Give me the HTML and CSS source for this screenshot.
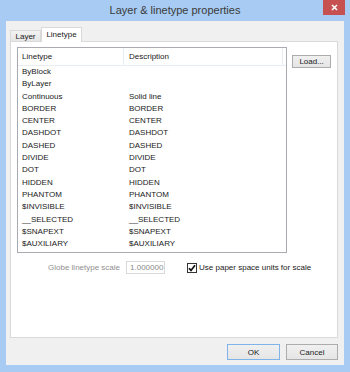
FILE: index.html
```html
<!DOCTYPE html>
<html lang="en">
<head>
  <meta charset="UTF-8">
  <title>Layer &amp; linetype properties</title>
  <link rel="stylesheet" href="styles.css">
</head>
<body>
  <div class="window">
    <div class="titlebar">
      <span></span>
      <span class="title">Layer &amp; linetype properties</span>
      <span class="close">
        <svg width="7" height="7" viewBox="0 0 7 7"><path d="M1 1L6 6M6 1L1 6" stroke="#fff" stroke-width="1.6"/></svg>
      </span>
    </div>
    <div class="client">
      <div class="tabs">
        <span class="tab">Layer</span>
        <span class="tab active">Linetype</span>
      </div>
      <div class="panel">
        <div class="top">
          <div class="listview">
            <div class="lv-head">
              <span class="c1">Linetype</span>
              <span class="c2">Description</span>
            </div>
            <div class="lv-body">
              <div class="row"><span class="c1">ByBlock</span><span class="c2"></span></div>
              <div class="row"><span class="c1">ByLayer</span><span class="c2"></span></div>
              <div class="row"><span class="c1">Continuous</span><span class="c2">Solid line</span></div>
              <div class="row"><span class="c1">BORDER</span><span class="c2">BORDER</span></div>
              <div class="row"><span class="c1">CENTER</span><span class="c2">CENTER</span></div>
              <div class="row"><span class="c1">DASHDOT</span><span class="c2">DASHDOT</span></div>
              <div class="row"><span class="c1">DASHED</span><span class="c2">DASHED</span></div>
              <div class="row"><span class="c1">DIVIDE</span><span class="c2">DIVIDE</span></div>
              <div class="row"><span class="c1">DOT</span><span class="c2">DOT</span></div>
              <div class="row"><span class="c1">HIDDEN</span><span class="c2">HIDDEN</span></div>
              <div class="row"><span class="c1">PHANTOM</span><span class="c2">PHANTOM</span></div>
              <div class="row"><span class="c1">$INVISIBLE</span><span class="c2">$INVISIBLE</span></div>
              <div class="row"><span class="c1">__SELECTED</span><span class="c2">__SELECTED</span></div>
              <div class="row"><span class="c1">$SNAPEXT</span><span class="c2">$SNAPEXT</span></div>
              <div class="row"><span class="c1">$AUXILIARY</span><span class="c2">$AUXILIARY</span></div>
            </div>
          </div>
          <button class="btn load">Load...</button>
        </div>
        <div class="options">
          <span class="muted">Globe linetype scale</span>
          <span class="input">1.000000</span>
          <span class="check">
            <svg width="8" height="8" viewBox="0 0 8 8"><path d="M1 4.2L3 6.4L7 1.2" fill="none" stroke="#111" stroke-width="1.7"/></svg>
          </span>
          <span class="check-label">Use paper space units for scale</span>
        </div>
      </div>
      <div class="footer">
        <button class="btn ok">OK</button>
        <button class="btn cancel">Cancel</button>
      </div>
    </div>
  </div>
</body>
</html>
```

FILE: styles.css
```css
*{
  box-sizing: border-box;
}
body{
  margin: 0;
  font-family: "Liberation Sans", Arial, sans-serif;
}
.window{
  width: 350px;
  height: 372px;
  background-color: #a7cbf2;
  display: flex;
  flex-direction: column;
}
.titlebar{
  height: 21px;
  display: grid;
  grid-template-columns: 1fr auto 1fr;
  align-items: start;
}
.titlebar .title{
  font-size: 11px;
  line-height: 21px;
  color: #3a3a3a;
}
.titlebar .close{
  justify-self: end;
  margin-right: 5px;
  width: 22px;
  height: 15px;
  background-color: #c75050;
  display: flex;
  align-items: center;
  justify-content: center;
}
.client{
  flex: 1;
  margin: 0 6px 7px;
  background-color: #f0f0f0;
  padding: 6px 6px 5px 4px;
  display: flex;
  flex-direction: column;
  font-size: 8px;
  color: #1a1a1a;
}
.tabs{
  height: 14px;
  display: flex;
  align-items: flex-end;
}
.tab{
  height: 11px;
  width: 31px;
  border: 1px solid #d9d9d9;
  border-bottom: none;
  background: linear-gradient(#f2f2f2, #e6e6e6);
  display: flex;
  align-items: center;
  justify-content: center;
  padding-top: 1px;
}
.tab.active{
  height: 15px;
  width: 41px;
  margin-bottom: -1px;
  background: #fff;
  position: relative;
  z-index: 1;
  padding-bottom: 2px;
}
.panel{
  height: 297px;
  border: 1px solid #d9d9d9;
  background-color: #fff;
  padding: 5px 6px 0;
}
.top{
  display: flex;
  align-items: flex-start;
}
.listview{
  width: 272px;
  height: 206px;
  border: 1px solid #a9abb1;
}
.lv-head{
  height: 18px;
  display: flex;
  border-bottom: 1px solid #e8edf3;
}
.lv-head span{
  display: flex;
  align-items: center;
  border-right: 1px solid #e8edf3;
}
.c1{
  width: 106px;
  padding-left: 4px;
}
.c2{
  width: 159px;
  padding-left: 5px;
}
.row{
  display: flex;
  height: 12.3px;
  line-height: 12.3px;
}
.btn{
  font-family: "Liberation Sans", Arial, sans-serif;
  font-size: 8px;
  color: #1a1a1a;
  padding: 0;
  border: 1px solid #acacac;
  background: linear-gradient(#f0f0f0, #e5e5e5);
}
.load{
  width: 39px;
  height: 13px;
  margin: 8px 0 0 5px;
}
.options{
  margin-top: 8px;
  height: 13px;
  padding-left: 31px;
  display: flex;
  align-items: center;
}
.muted{
  color: #8f8f8f;
}
.input{
  margin-left: 6px;
  width: 39px;
  height: 13px;
  border: 1px solid #d9d9d9;
  color: #8a8a8a;
  padding-left: 3px;
  line-height: 11px;
}
.check{
  margin-left: 22px;
  width: 10px;
  height: 10px;
  border: 1px solid #333;
  display: flex;
  align-items: center;
  justify-content: center;
}
.check-label{
  margin-left: 2px;
}
.footer{
  margin-top: 6px;
  display: flex;
  justify-content: flex-end;
  gap: 6px;
}
.footer .btn{
  height: 16px;
}
.ok{
  width: 53px;
  border-color: #7eb4ea;
}
.cancel{
  width: 52px;
}
```
